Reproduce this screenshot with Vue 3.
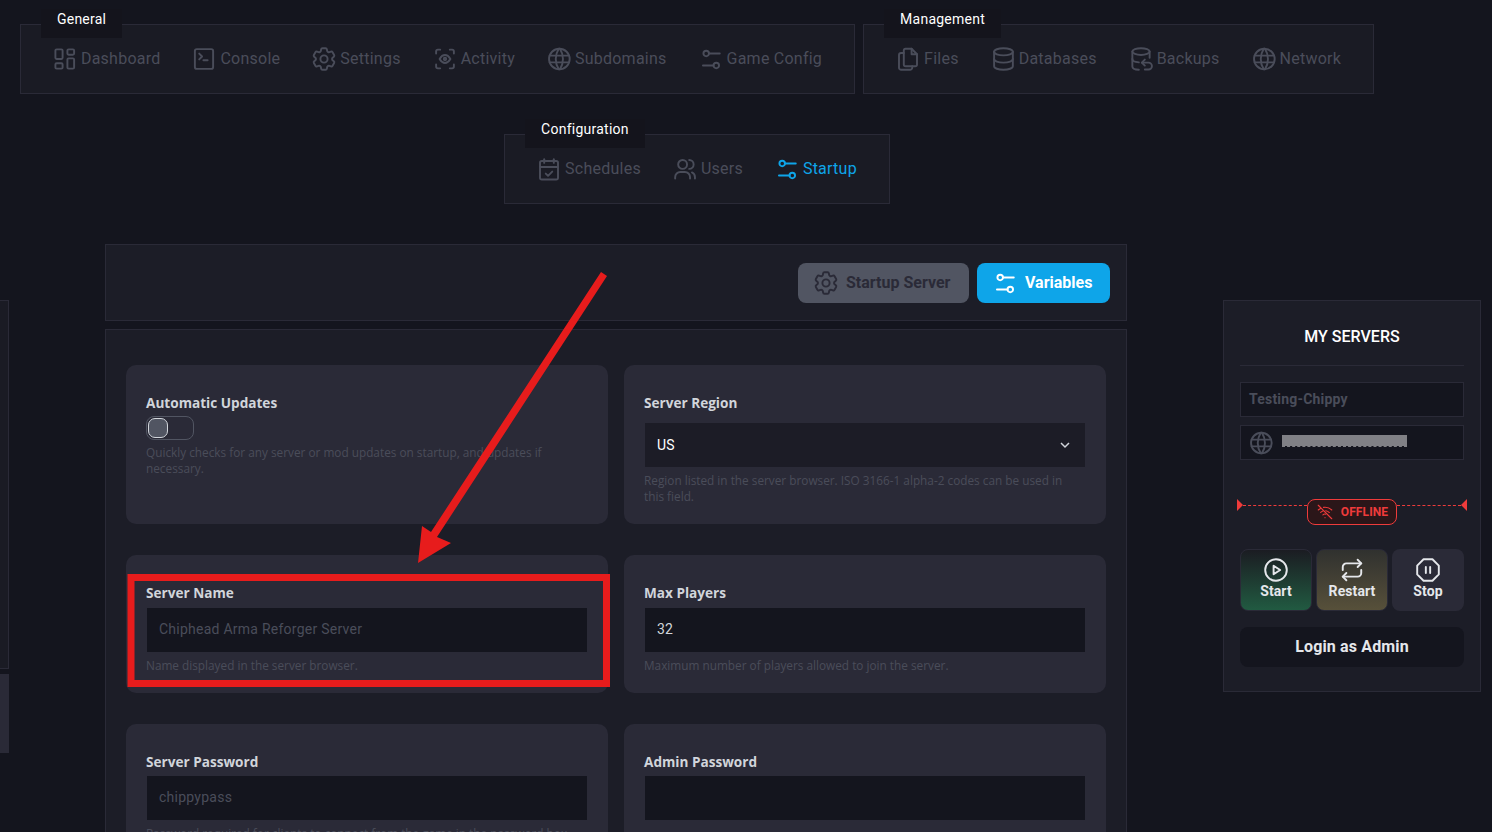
<script setup>
const icons = {
  dashboard: ['M5 4h4a1 1 0 0 1 1 1v6a1 1 0 0 1-1 1H5a1 1 0 0 1-1-1V5a1 1 0 0 1 1-1z', 'M5 15.500h4a1 1 0 0 1 1 1V19a1 1 0 0 1-1 1H5a1 1 0 0 1-1-1v-2.500a1 1 0 0 1 1-1z', 'M15 11.500h3.600a1 1 0 0 1 1 1V19a1 1 0 0 1-1 1H15a1 1 0 0 1-1-1v-6.500a1 1 0 0 1 1-1z', 'M15 4h3.600a1 1 0 0 1 1 1v2.500a1 1 0 0 1-1 1H15a1 1 0 0 1-1-1V5a1 1 0 0 1 1-1z'],
  console: ['M8 7.500l2.400 2.400L8 12.300', 'M11.500 13H15', 'M6 3.800h12a1.600 1.600 0 0 1 1.600 1.600v13.200a1.600 1.600 0 0 1-1.600 1.600H6a1.600 1.600 0 0 1-1.600-1.600V5.400A1.600 1.600 0 0 1 6 3.800z'],
  settings: ['M9.594 3.94c.09-.542.56-.94 1.11-.94h2.593c.55 0 1.02.398 1.11.94l.213 1.281c.063.374.313.686.645.87.074.04.147.083.22.127.325.196.72.257 1.075.124l1.217-.456a1.125 1.125 0 0 1 1.37.49l1.296 2.247a1.125 1.125 0 0 1-.26 1.431l-1.003.827c-.293.241-.438.613-.43.992a7.723 7.723 0 0 1 0 .255c-.008.378.137.75.43.991l1.004.827c.424.35.534.955.26 1.43l-1.298 2.247a1.125 1.125 0 0 1-1.369.491l-1.217-.456c-.355-.133-.75-.072-1.076.124a6.47 6.47 0 0 1-.22.128c-.331.183-.581.495-.644.869l-.213 1.281c-.09.543-.56.94-1.11.94h-2.594c-.55 0-1.019-.398-1.11-.94l-.213-1.281c-.062-.374-.312-.686-.644-.87a6.52 6.52 0 0 1-.22-.127c-.325-.196-.72-.257-1.076-.124l-1.217.456a1.125 1.125 0 0 1-1.369-.49l-1.297-2.247a1.125 1.125 0 0 1 .26-1.431l1.004-.827c.292-.24.437-.613.43-.991a6.932 6.932 0 0 1 0-.255c.007-.38-.138-.751-.43-.992l-1.004-.827a1.125 1.125 0 0 1-.26-1.43l1.297-2.247a1.125 1.125 0 0 1 1.37-.491l1.216.456c.356.133.751.072 1.076-.124.072-.044.146-.086.22-.128.332-.183.582-.495.644-.869l.214-1.28Z', 'M15 12a3 3 0 1 1-6 0 3 3 0 0 1 6 0Z'],
  activity: ['M4.600 7.500V5.700a1.500 1.500 0 0 1 1.500-1.500h1.900', 'M16 4.200h1.900a1.500 1.500 0 0 1 1.500 1.500v1.800', 'M19.400 16.500v1.800a1.500 1.500 0 0 1-1.500 1.500H16', 'M8 19.800H6.100a1.500 1.500 0 0 1-1.500-1.500v-1.800', 'M7.500 12c1.300-2.200 2.800-3.300 4.500-3.300s3.200 1.100 4.500 3.300c-1.300 2.200-2.800 3.300-4.500 3.300S8.800 14.200 7.500 12z', 'M12 11a1 1 0 1 0 0 2 1 1 0 0 0 0-2z'],
  globe: ['M12.300 3.400a8.600 8.600 0 1 0 0 17.200 8.600 8.600 0 0 0 0-17.200z', 'M4.200 9.200h16.200', 'M4.200 14.800h16.200', 'M11.800 3.400a16 16 0 0 0 0 17.200', 'M12.800 3.400a16 16 0 0 1 0 17.200'],
  sliders: ['M10.300 7.400h9', 'M5.300 17.400h8.800', 'M5.700 7.400a2.300 2.300 0 1 0 4.600 0 2.300 2.300 0 0 0-4.600 0z', 'M14.100 17.400a2.300 2.300 0 1 0 4.600 0 2.300 2.300 0 0 0-4.600 0z'],
  files: ['M10 3.500h5l4.500 4.500v8.500a1.500 1.500 0 0 1-1.500 1.500h-8a1.500 1.500 0 0 1-1.500-1.500V5A1.500 1.500 0 0 1 10 3.500z', 'M15 3.500V8h4.500', 'M8.500 7H6.300a1.800 1.800 0 0 0-1.800 1.800v10.400A1.800 1.800 0 0 0 6.300 21h7.400a1.800 1.800 0 0 0 1.800-1.800V18'],
  database: ['M12.400 3c4.400 0 7.800 1.300 7.800 3s-3.400 3-7.800 3-7.800-1.300-7.800-3 3.400-3 7.800-3z', 'M4.600 6v12c0 1.700 3.400 3 7.800 3s7.800-1.300 7.800-3V6', 'M4.600 12c0 1.700 3.400 3 7.800 3s7.800-1.300 7.800-3'],
  backup: ['M12 3c3.900 0 7.200 1.200 7.200 2.800s-3.300 2.800-7.200 2.800-7.200-1.200-7.200-2.800S8.100 3 12 3z', 'M4.800 5.800v12.400c0 1.500 2.200 2.600 5.400 2.800', 'M19.200 5.800V11', 'M4.800 12c0 1.500 2.200 2.600 5.400 2.800', 'M12.700 15h5.500a2.900 2.900 0 0 1 0 5.800h-3', 'M15.200 12.500L12.700 15l2.500 2.500'],
  calendar: ['M6 5.300h12a1.500 1.500 0 0 1 1.500 1.500v12.400a1.500 1.500 0 0 1-1.500 1.500H6a1.500 1.500 0 0 1-1.500-1.500V6.800A1.500 1.500 0 0 1 6 5.300z', 'M8 3.900v3', 'M16 3.900v3', 'M4.500 10.300h15', 'M9.300 15.800l1.900 1.900 3.500-3.500'],
  users: ['M10 4.500a3.700 3.700 0 1 0 0 7.400 3.700 3.700 0 0 0 0-7.400z', 'M3.800 20v-1.200a4.300 4.300 0 0 1 4.300-4.300h3.800a4.300 4.300 0 0 1 4.300 4.300V20', 'M15.500 4.500a3.700 3.700 0 0 1 0 7.400', 'M20.300 20v-1.200a4.300 4.300 0 0 0-2.500-3.900'],
  wifioff: ['M3 3l18 18', 'M12 19.500h.01', 'M9.200 15.800a4 4 0 0 1 3.800-.9', 'M6.200 12.500a8 8 0 0 1 3-1.900', 'M13 10.300a8 8 0 0 1 4.800 2.400', 'M3 9.300a13 13 0 0 1 3-2.100', 'M10 5.800a13 13 0 0 1 11 3.500'],
  play: ['M12 3a9 9 0 1 0 0 18 9 9 0 0 0 0-18z', 'M10 8.500v7l5.500-3.500z'],
  repeat: ['M4.300 12V9.500a3 3 0 0 1 3-3h12.400', 'M16.700 3.500l3 3-3 3', 'M19.700 12v2.500a3 3 0 0 1-3 3H4.300', 'M7.300 20.500l-3-3 3-3'],
  stop: ['M8.300 3h7.400L21 8.300v7.400L15.700 21H8.300L3 15.700V8.300z', 'M10.200 9.500v5', 'M13.800 9.500v5'],
}

const navGroups = [
  {
    title: 'General',
    items: [
      { icon: 'dashboard', label: 'Dashboard' },
      { icon: 'console', label: 'Console' },
      { icon: 'settings', label: 'Settings' },
      { icon: 'activity', label: 'Activity' },
      { icon: 'globe', label: 'Subdomains' },
      { icon: 'sliders', label: 'Game Config' },
    ],
  },
  {
    title: 'Management',
    items: [
      { icon: 'files', label: 'Files' },
      { icon: 'database', label: 'Databases' },
      { icon: 'backup', label: 'Backups' },
      { icon: 'globe', label: 'Network' },
    ],
  },
  {
    title: 'Configuration',
    items: [
      { icon: 'calendar', label: 'Schedules' },
      { icon: 'users', label: 'Users' },
      { icon: 'sliders', label: 'Startup', active: true },
    ],
  },
]

const powerButtons = [
  { icon: 'play', label: 'Start', cls: 'start' },
  { icon: 'repeat', label: 'Restart', cls: 'restart' },
  { icon: 'stop', label: 'Stop', cls: 'stop' },
]
</script>

<template>
  <div class="page">
    <nav class="nav">
      <section v-for="group in navGroups" :key="group.title" class="group">
        <span class="legend">{{ group.title }}</span>
        <a
          v-for="item in group.items"
          :key="item.label"
          class="nav-item"
          :class="{ active: item.active }"
        >
          <svg class="icon" viewBox="2 2 20 20">
            <path v-for="d in icons[item.icon]" :key="d" :d="d" />
          </svg>
          <span>{{ item.label }}</span>
        </a>
      </section>
    </nav>

    <div class="layout">
      <aside class="rail">
        <div class="rail-top"></div>
        <div class="rail-bottom"></div>
      </aside>

      <main class="content">
        <div class="toolbar">
          <button class="tab tab-muted">
            <svg class="icon" viewBox="2 2 20 20">
              <path v-for="d in icons.settings" :key="d" :d="d" />
            </svg>
            Startup Server
          </button>
          <button class="tab tab-active">
            <svg class="icon" viewBox="2 2 20 20">
              <path v-for="d in icons.sliders" :key="d" :d="d" />
            </svg>
            Variables
          </button>
        </div>

        <div class="vars">
          <div class="card card-tall">
            <label class="label">Automatic Updates</label>
            <div class="toggle"><span class="knob"></span></div>
            <p class="help">Quickly checks for any server or mod updates on startup, and updates if necessary.</p>
          </div>
          <div class="card card-tall">
            <label class="label">Server Region</label>
            <div class="select">
              <span>US</span>
              <svg class="chev" viewBox="0 0 12 12"><path d="M2 4l4 4 4-4" /></svg>
            </div>
            <p class="help">Region listed in the server browser. ISO 3166-1 alpha-2 codes can be used in this field.</p>
          </div>
          <div class="card">
            <label class="label">Server Name</label>
            <div class="input">Chiphead Arma Reforger Server</div>
            <p class="help">Name displayed in the server browser.</p>
          </div>
          <div class="card">
            <label class="label">Max Players</label>
            <div class="input filled">32</div>
            <p class="help">Maximum number of players allowed to join the server.</p>
          </div>
          <div class="card row-three">
            <label class="label">Server Password</label>
            <div class="input">chippypass</div>
            <p class="help">Password required for clients to connect from the game in the password box.</p>
          </div>
          <div class="card row-three">
            <label class="label">Admin Password</label>
            <div class="input"></div>
          </div>
        </div>
      </main>

      <aside class="side">
        <h2 class="side-title">MY SERVERS</h2>
        <div class="field field-name">Testing-Chippy</div>
        <div class="field field-ip">
          <svg class="icon" viewBox="2 2 20 20">
            <path v-for="d in icons.globe" :key="d" :d="d" />
          </svg>
          <span class="redact"></span>
        </div>
        <div class="status">
          <span class="tri tri-l"></span>
          <span class="dash"></span>
          <span class="badge">
            <svg class="wifi" viewBox="0 0 24 24">
              <path v-for="d in icons.wifioff" :key="d" :d="d" />
            </svg>
            OFFLINE
          </span>
          <span class="dash"></span>
          <span class="tri tri-r"></span>
        </div>
        <div class="power">
          <button v-for="b in powerButtons" :key="b.label" class="power-btn" :class="b.cls">
            <svg class="power-icon" viewBox="2 2 20 20">
              <path v-for="d in icons[b.icon]" :key="d" :d="d" />
            </svg>
            {{ b.label }}
          </button>
        </div>
        <button class="login">Login as Admin</button>
      </aside>
    </div>

    <svg class="annotation" viewBox="0 0 1492 832" width="1492" height="832">
      <polygon points="601,272 607,276 437,537 451,543 418,563 422,526 431,532" />
      <rect x="131" y="577.500" width="475.500" height="106" />
    </svg>
  </div>
</template>

<style>
html, body { margin: 0; background: #14151e; }
</style>

<style scoped>
* { box-sizing: border-box; }

.page {
  position: relative;
  width: 1492px;
  height: 832px;
  overflow: hidden;
  background: #14151e;
  font-family: Roboto, "Liberation Sans", sans-serif;
}

.nav {
  width: 1394px;
  padding-top: 24px;
  display: flex;
  flex-wrap: wrap;
  justify-content: center;
  column-gap: 8px;
  row-gap: 40px;
}

.group {
  position: relative;
  height: 70px;
  padding: 0 32px;
  display: flex;
  align-items: center;
  gap: 32px;
  background: #1a1b24;
  border: 1px solid #2a2a37;
}

.legend {
  position: absolute;
  left: 20px;
  top: -16px;
  height: 29px;
  padding: 0 16px;
  line-height: 20px;
  font-size: 14px;
  letter-spacing: 0.25px;
  color: #fff;
  background: #14141c;
}

.nav-item {
  display: flex;
  align-items: center;
  gap: 4px;
  font-size: 16px;
  letter-spacing: 0.24px;
  color: #4a4d5a;
}

.nav-item span { margin-bottom: 2px; }

.nav-item.active { color: #0ea5e9; }

.icon {
  width: 24px;
  height: 24px;
  flex: none;
  fill: none;
  stroke: currentColor;
  stroke-width: 1.6;
  stroke-linecap: round;
  stroke-linejoin: round;
}

.layout {
  display: flex;
  align-items: flex-start;
  margin-top: 40px;
}

.rail {
  width: 9px;
  margin-top: 56px;
  display: flex;
  flex-direction: column;
  gap: 5px;
}

.rail-top {
  height: 369px;
  background: #1a1b24;
  border-right: 1px solid #2a2a37;
  border-top: 1px solid #2a2a37;
  border-bottom: 1px solid #2a2a37;
}

.rail-bottom {
  height: 79px;
  background: #2a2a37;
}

.content {
  width: 1022px;
  margin-left: 96px;
  display: flex;
  flex-direction: column;
  gap: 8px;
}

.toolbar {
  height: 77px;
  padding: 0 16px;
  display: flex;
  align-items: center;
  justify-content: flex-end;
  gap: 8px;
  background: #1c1d27;
  border: 1px solid #2a2a37;
}

.tab {
  height: 40px;
  width: 171px;
  padding: 0 16px;
  display: flex;
  align-items: center;
  gap: 8px;
  border: 0;
  border-radius: 8px;
  font-family: inherit;
  font-size: 16px;
  font-weight: 700;
  white-space: nowrap;
}

.tab-muted { background: #515562; color: #2a2a37; }
.tab-active { width: 133px; background: #0ea5e9; color: #fff; }

.vars {
  padding: 35px 20px;
  display: grid;
  grid-template-columns: 1fr 1fr;
  column-gap: 16px;
  row-gap: 31px;
  background: #1c1d27;
  border: 1px solid #2a2a37;
}

.card {
  height: 138px;
  padding: 30px 20px 19px;
  background: #2a2a37;
  border-radius: 10px;
}

.card-tall { height: 159px; }

.label {
  display: block;
  height: 16px;
  font-family: "Open Sans", sans-serif;
  font-size: 13.6px;
  line-height: 16px;
  font-weight: 700;
  color: #d1d5db;
}

.toggle {
  width: 48px;
  height: 24px;
  margin-top: 5px;
  padding: 1px;
  border: 1px solid #515562;
  border-radius: 8px;
}

.knob {
  display: block;
  width: 20px;
  height: 20px;
  background: #515562;
  border: 1px solid #d1d5db;
  border-radius: 7px;
}

.select,
.input {
  height: 46px;
  display: flex;
  align-items: center;
  padding: 0 12px;
  border: 1px solid #2a2a37;
  font-size: 14px;
  letter-spacing: 0.25px;
}

.input {
  margin-top: 6px;
  padding-bottom: 2px;
  background: #14151e;
  color: #4a4d5a;
}

.input.filled { color: #d1d5db; }

.row-three .input { margin-top: 5px; }

.select {
  margin-top: 11px;
  justify-content: space-between;
  background: #1c1c26;
  color: #fff;
}

.chev {
  width: 12px;
  height: 12px;
  margin-right: 2px;
  fill: none;
  stroke: #d1d5db;
  stroke-width: 1.5;
}

.help {
  margin: 4px 0 0;
  padding-right: 16px;
  font-family: "Open Sans", sans-serif;
  font-size: 11.8px;
  line-height: 16px;
  color: #4a4d5a;
}

.side {
  width: 258px;
  height: 392px;
  margin-left: 96px;
  margin-top: 56px;
  padding: 0 16px;
  background: #1c1d27;
  border: 1px solid #2a2a37;
}

.side-title {
  height: 65px;
  margin: 0;
  text-align: center;
  font-size: 16px;
  font-weight: 500;
  line-height: 72px;
  color: #fff;
  border-bottom: 1px solid #2a2a37;
}

.field {
  height: 35px;
  display: flex;
  align-items: center;
  background: #14151e;
  border: 1px solid #2a2a37;
  color: #4a4d5a;
}

.field-name {
  margin-top: 16px;
  padding: 0 0 2px 8px;
  font-size: 14px;
  font-weight: 700;
  letter-spacing: 0.2px;
}

.field-ip {
  margin-top: 8px;
  padding-left: 8px;
  gap: 9px;
}

.redact {
  width: 125px;
  height: 12px;
  margin-top: -4px;
  background: #808085 padding-box;
  border-bottom: 1px dashed #808085;
}

.status {
  height: 26px;
  margin: 39px -3px 0;
  display: flex;
  align-items: center;
}

.dash {
  flex: 1;
  border-top: 1px dashed #ef3b3b;
  margin-top: -14px;
}

.tri {
  width: 0;
  height: 0;
  margin-top: -14px;
  border-top: 6px solid transparent;
  border-bottom: 6px solid transparent;
}

.tri-l { border-left: 6px solid #ef3b3b; }
.tri-r { border-right: 6px solid #ef3b3b; }

.badge {
  width: 90px;
  height: 26px;
  display: flex;
  align-items: center;
  justify-content: center;
  gap: 7px;
  font-size: 12px;
  font-weight: 700;
  letter-spacing: 0.1px;
  color: #ef3b3b;
  background: #2b1619;
  border: 1px solid #ef3b3b;
  border-radius: 8px;
}

.wifi {
  width: 18px;
  height: 18px;
  fill: none;
  stroke: #ef3b3b;
  stroke-width: 1.5;
  stroke-linecap: round;
}

.power {
  margin-top: 24px;
  display: grid;
  grid-template-columns: repeat(3, 72px);
  gap: 4px;
}

.power-btn {
  height: 62px;
  padding: 8px 0 0;
  display: flex;
  flex-direction: column;
  align-items: center;
  border: 1px solid transparent;
  border-radius: 8px;
  font-family: inherit;
  font-size: 14px;
  font-weight: 700;
  letter-spacing: 0.1px;
  line-height: 18px;
  color: #e5e7eb;
}

.power-icon {
  width: 24px;
  height: 24px;
  flex: none;
  fill: none;
  stroke: currentColor;
  stroke-width: 1.6;
  stroke-linecap: round;
  stroke-linejoin: round;
}

.start { background: linear-gradient(#1b1c22, #215a41); border-color: #2a2a37; }
.restart { background: linear-gradient(#30312f, #57503a); border-color: #2a2a37; }
.stop { background: #2a2a37; }

.login {
  width: 100%;
  height: 40px;
  margin-top: 16px;
  padding: 0 0 2px;
  border: 0;
  border-radius: 8px;
  background: #14151e;
  color: #e5e7eb;
  font-family: inherit;
  font-size: 16px;
  font-weight: 700;
  letter-spacing: 0.15px;
}

.annotation {
  position: absolute;
  left: 0;
  top: 0;
  pointer-events: none;
}

.annotation polygon { fill: #e71c1c; }
.annotation rect { fill: none; stroke: #e71c1c; stroke-width: 7; }
</style>
